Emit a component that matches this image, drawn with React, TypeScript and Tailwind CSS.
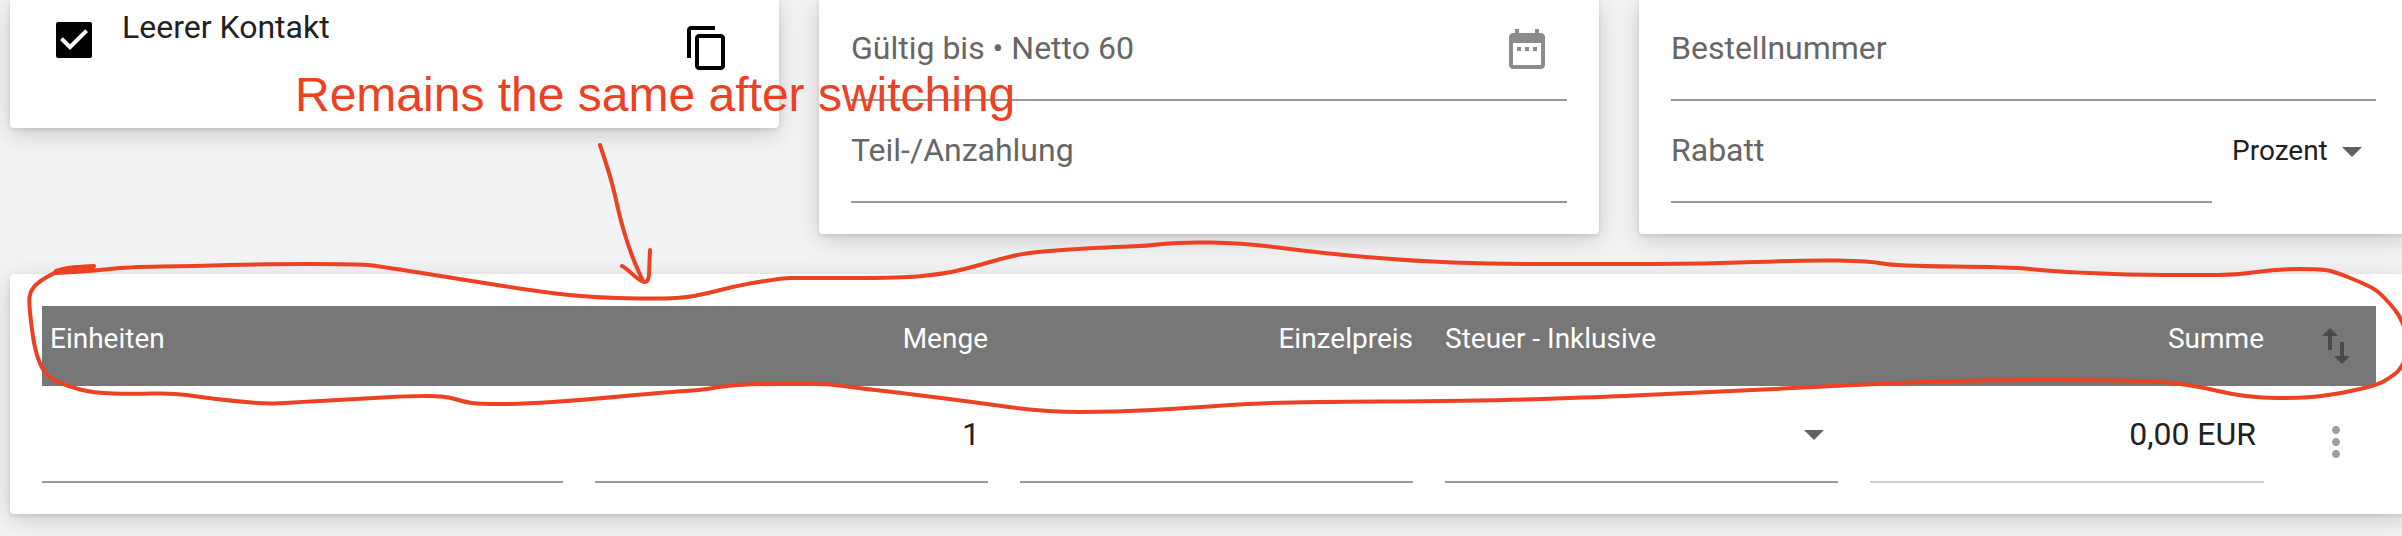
import type { ReactNode } from 'react';

const cardShadow = 'shadow-[0_2px_4px_0_rgba(0,0,0,0.1),0_6px_24px_0_rgba(0,0,0,0.16)]';

// Outline drawn around the table header, as x/y pairs
const loop: number[][] = [
    [94, 266], [73, 267], [55, 272], [37, 283], [30, 292], [29, 302], [31, 323], [35, 350], [42, 369],
    [50, 378], [67, 386], [93, 393], [133, 394], [173, 393], [200, 397], [233, 401], [270, 404],
    [300, 402], [357, 399], [408, 396], [446, 396], [464, 402], [480, 404], [523, 404], [582, 400],
    [668, 392], [702, 390], [724, 386], [755, 384], [800, 384], [826, 384], [843, 386], [866, 389],
    [902, 393], [973, 402], [1045, 412], [1116, 412], [1188, 408], [1272, 402], [1484, 401],
    [1600, 397], [1668, 394], [1816, 387], [1893, 383], [1974, 380], [2133, 380], [2189, 384],
    [2247, 398], [2307, 398], [2343, 393], [2377, 385], [2390, 378], [2402, 368], [2410, 345],
    [2402, 320], [2393, 307], [2377, 290], [2360, 282], [2338, 273], [2323, 269], [2277, 269],
    [2237, 275], [2200, 275], [2127, 275], [2051, 271], [2010, 267], [1895, 266], [1870, 261],
    [1806, 260], [1704, 264], [1602, 264], [1494, 264], [1412, 261], [1320, 253], [1244, 243],
    [1178, 242], [1147, 246], [1111, 247], [1045, 251], [1014, 255], [973, 267], [943, 274],
    [902, 278], [800, 278], [783, 278], [740, 285], [709, 293], [679, 299], [597, 298], [541, 292],
    [459, 279], [378, 266], [357, 264], [265, 264], [194, 266], [128, 267], [92, 271], [56, 273],
];

const shaft: number[][] = [[600, 145], [609, 172], [615, 195], [620, 218], [628, 245], [636, 266], [643, 281]];

function smooth(points: number[][]) {
    let d = `M${points[0][0]} ${points[0][1]}`;
    for (let i = 1; i < points.length - 1; i++) {
        const [x, y] = points[i];
        const [nx, ny] = points[i + 1];
        d += ` Q${x} ${y} ${(x + nx) / 2} ${(y + ny) / 2}`;
    }
    const last = points[points.length - 1];
    return `${d} L${last[0]} ${last[1]}`;
}

function Icon({ d, className }: { d: string; className?: string }) {
    return (
        <svg viewBox="0 0 24 24" fill="currentColor" className={`size-12 ${className ?? ''}`} aria-hidden="true">
            <path d={d} />
        </svg>
    );
}

function Caret({ className }: { className: string }) {
    return (
        <svg
            viewBox="0 0 20 10"
            fill="currentColor"
            className={`pointer-events-none absolute top-1/2 h-2.5 w-5 -translate-y-1/2 text-[#616161] ${className}`}
            aria-hidden="true"
        >
            <path d="M0 0h20L10 10z" />
        </svg>
    );
}

function Field({ label, children }: { label: string; children?: ReactNode }) {
    return (
        <div className="flex h-[102px] flex-1 items-center border-b-2 border-[#999]">
            <input
                type="text"
                aria-label={label}
                placeholder={label}
                className="h-full min-w-0 flex-1 bg-transparent pb-0.5 text-[32px] outline-none placeholder:text-[#666]"
            />
            {children}
        </div>
    );
}

function ContactCard() {
    return (
        <section className={`flex h-[129px] items-start rounded-b bg-white pt-2 pr-12 pl-[46px] ${cardShadow}`}>
            <label className="flex flex-1 items-start gap-[30px]">
                <span className="relative mt-[15px] block size-9">
                    <input
                        type="checkbox"
                        defaultChecked
                        className="peer block size-9 appearance-none rounded-xs border-4 border-black checked:bg-black"
                    />
                    <svg
                        viewBox="3 3 18 18"
                        fill="white"
                        className="pointer-events-none absolute inset-0 hidden size-9 peer-checked:block"
                        aria-hidden="true"
                    >
                        <path d="M10 17l-5-5 1.41-1.41L10 14.17l7.59-7.59L19 8z" />
                    </svg>
                </span>
                <span className="text-[32px] leading-10">Leerer Kontakt</span>
            </label>
            <button type="button" aria-label="Kopieren" className="mt-[17px] text-black">
                <Icon d="M16 1H4c-1.1 0-2 .9-2 2v14h2V3h12V1zm3 4H8c-1.1 0-2 .9-2 2v14c0 1.1.9 2 2 2h11c1.1 0 2-.9 2-2V7c0-1.1-.9-2-2-2zm0 16H8V7h11v14z" />
            </button>
        </section>
    );
}

function TermsCard() {
    return (
        <section className={`rounded-b bg-white px-8 pb-[31px] ${cardShadow}`}>
            <Field label="Gültig bis • Netto 60">
                <button type="button" aria-label="Datum wählen" className="mr-4 text-[#8c8c8c]">
                    <Icon d="M9 11H7v2h2v-2zm4 0h-2v2h2v-2zm4 0h-2v2h2v-2zm2-7h-1V2h-2v2H8V2H6v2H5c-1.11 0-1.99.9-1.99 2L3 20c0 1.1.89 2 2 2h14c1.1 0 2-.9 2-2V6c0-1.1-.9-2-2-2zm0 16H5V9h14v11z" />
                </button>
            </Field>
            <Field label="Teil-/Anzahlung" />
        </section>
    );
}

function OrderCard() {
    return (
        <section className={`rounded-b bg-white px-8 pb-[31px] ${cardShadow}`}>
            <Field label="Bestellnummer" />
            <div className="flex">
                <Field label="Rabatt" />
                <div className="relative ml-5 h-[102px] w-36">
                    <select
                        aria-label="Rabattart"
                        className="h-full w-full appearance-none bg-transparent pb-0.5 text-[28px] outline-none"
                    >
                        <option>Prozent</option>
                        <option>Betrag</option>
                    </select>
                    <Caret className="right-3.5" />
                </div>
            </div>
        </section>
    );
}

function ItemsTable() {
    const cell = 'h-[97px] w-full border-b-2 border-[#999] bg-transparent px-2 text-[32px] outline-none';

    return (
        <section className={`mt-10 rounded bg-white px-8 pt-8 pb-[31px] ${cardShadow}`}>
            <table className="w-full table-fixed">
                <colgroup>
                    <col />
                    <col className="w-[425px]" />
                    <col className="w-[425px]" />
                    <col className="w-[425px]" />
                    <col className="w-[394px]" />
                    <col className="w-28" />
                </colgroup>
                <thead>
                    <tr className="h-20 bg-[#777] align-top text-[28px] leading-8 text-white">
                        <th className="pt-[17px] pl-2 text-left font-normal">Einheiten</th>
                        <th className="pt-[17px] pr-8 text-right font-normal">Menge</th>
                        <th className="pt-[17px] pr-8 text-right font-normal">Einzelpreis</th>
                        <th className="pt-[17px] text-left font-normal">Steuer - Inklusive</th>
                        <th className="pt-[17px] text-right font-normal">Summe</th>
                        <th className="pt-4 pl-12 text-left">
                            <button type="button" aria-label="Sortieren" className="block text-[#4a4a4a]">
                                <Icon d="M16 17.01V10h-2v7.01h-3L15 21l4-3.99h-3zM9 3L5 6.99h3V14h2V6.99h3L9 3z" />
                            </button>
                        </th>
                    </tr>
                </thead>
                <tbody>
                    <tr className="align-top">
                        <td className="pr-8">
                            <input type="text" aria-label="Einheiten" className={`${cell} block`} />
                        </td>
                        <td className="pr-8">
                            <input type="text" aria-label="Menge" defaultValue="1" className={`${cell} block text-right`} />
                        </td>
                        <td className="pr-8">
                            <input type="text" aria-label="Einzelpreis" className={`${cell} block text-right`} />
                        </td>
                        <td className="pr-8">
                            <div className="relative">
                                <select aria-label="Steuer" className={`${cell} block appearance-none`}>
                                    <option></option>
                                    <option>19 %</option>
                                </select>
                                <Caret className="right-3.5" />
                            </div>
                        </td>
                        <td>
                            <input
                                type="text"
                                aria-label="Summe"
                                readOnly
                                value="0,00 EUR"
                                className="block h-[97px] w-full border-b-2 border-[#ccc] bg-transparent px-2 text-right text-[32px] outline-none"
                            />
                        </td>
                        <td className="pt-8 pl-12">
                            <button type="button" aria-label="Mehr" className="block text-[#9e9e9e]">
                                <Icon d="M12 8c1.1 0 2-.9 2-2s-.9-2-2-2-2 .9-2 2 .9 2 2 2zm0 2c-1.1 0-2 .9-2 2s.9 2 2 2 2-.9 2-2-.9-2-2-2zm0 6c-1.1 0-2 .9-2 2s.9 2 2 2 2-.9 2-2-.9-2-2-2z" />
                            </button>
                        </td>
                    </tr>
                </tbody>
            </table>
        </section>
    );
}

function Annotation() {
    return (
        <div className="pointer-events-none absolute inset-0 text-[#ec4123]">
            <p className="absolute top-[67px] left-[295px] font-['Liberation_Sans',Arial,sans-serif] text-[48px] leading-[56px] whitespace-nowrap">
                Remains the same after switching
            </p>
            <svg
                viewBox="0 0 2402 536"
                fill="none"
                stroke="currentColor"
                strokeWidth="4"
                strokeLinecap="round"
                strokeLinejoin="round"
                className="w-full"
                aria-hidden="true"
            >
                <path d={smooth(loop)} />
                <path d="M56 271Q74 265 93 268L92 270Q76 270 62 272" />
                <path d={smooth(shaft)} />
                <path d="M622 266C630 270 636 280 644 282Q649 282 649 274L650 250" />
            </svg>
        </div>
    );
}

export default function App() {
    return (
        <div className="relative min-h-screen overflow-hidden bg-[#f1f3f5] font-[Roboto,'Liberation_Sans',sans-serif] text-[#212121]">
            <main className="-mt-px -mr-1.5 pl-2.5">
                <div className="grid grid-cols-[769fr_780fr_769fr] items-start gap-10">
                    <ContactCard />
                    <TermsCard />
                    <OrderCard />
                </div>
                <ItemsTable />
            </main>
            <Annotation />
        </div>
    );
}
